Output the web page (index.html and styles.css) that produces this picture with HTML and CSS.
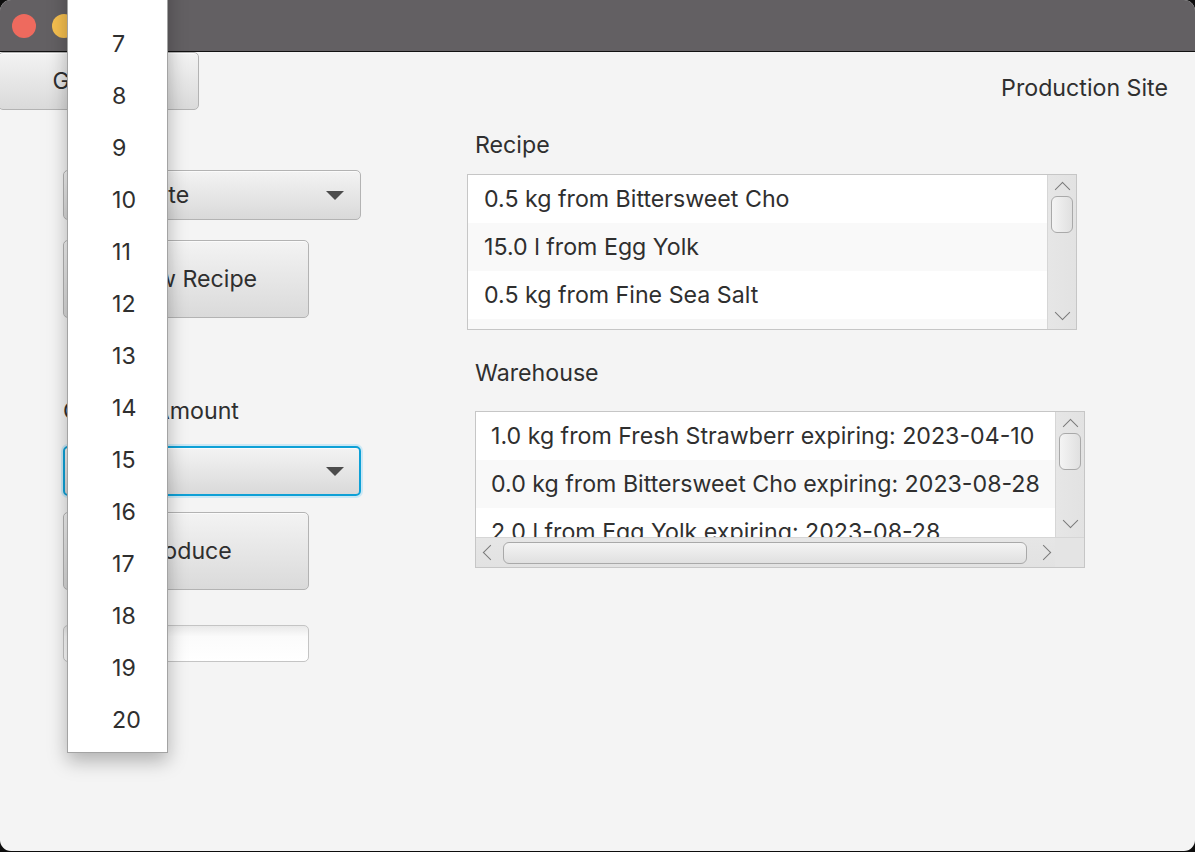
FILE: index.html
```html
<!DOCTYPE html>
<html>
<head>
<meta charset="utf-8">
<link rel="stylesheet" href="styles.css">
</head>
<body>
<div class="window">
  <div class="titlebar">
    <span class="light red"></span>
    <span class="light yellow"></span>
    <span class="light green"></span>
  </div>
  <div class="content">
    <div class="topbar">
      <button class="btn back">Go Back</button>
      <span class="site">Production Site</span>
    </div>
    <div class="main">
      <div class="left">
        <div class="combo"><span class="combo-text">Chocolate</span><i class="arrow"></i></div>
        <button class="btn big recipe-btn">Show Recipe</button>
        <div class="label amount">Choose Amount</div>
        <div class="combo focused"><span class="combo-text"></span><i class="arrow"></i></div>
        <button class="btn big produce-btn">Produce</button>
        <div class="field"></div>
      </div>
      <div class="right">
        <div class="label title recipe-title">Recipe</div>
        <div class="list recipe-list">
          <div class="rows">
            <div class="row">0.5 kg from Bittersweet Cho</div>
            <div class="row odd">15.0 l from Egg Yolk</div>
            <div class="row">0.5 kg from Fine Sea Salt</div>
            <div class="row odd"></div>
          </div>
          <div class="vscroll">
            <span class="chev up"></span>
            <span class="vthumb"></span>
            <span class="vspace"></span>
            <span class="chev down"></span>
          </div>
        </div>
        <div class="label title wh-title">Warehouse</div>
        <div class="list wh-list">
          <div class="wh-top">
            <div class="rows">
              <div class="row">1.0 kg from Fresh Strawberr expiring: 2023-04-10</div>
              <div class="row odd">0.0 kg from Bittersweet Cho expiring: 2023-08-28</div>
              <div class="row">2.0 l from Egg Yolk expiring: 2023-08-28</div>
            </div>
            <div class="vscroll">
              <span class="chev up"></span>
              <span class="vthumb"></span>
              <span class="vspace"></span>
              <span class="chev down"></span>
            </div>
          </div>
          <div class="hscroll">
            <span class="chev left"></span>
            <span class="hthumb"></span>
            <span class="chev right"></span>
            <span class="corner"></span>
          </div>
        </div>
      </div>
    </div>
  </div>
  <div class="popup">
    <div class="item">6</div>
    <div class="item">7</div>
    <div class="item">8</div>
    <div class="item">9</div>
    <div class="item">10</div>
    <div class="item">11</div>
    <div class="item">12</div>
    <div class="item">13</div>
    <div class="item">14</div>
    <div class="item">15</div>
    <div class="item">16</div>
    <div class="item">17</div>
    <div class="item">18</div>
    <div class="item">19</div>
    <div class="item">20</div>
  </div>
</div>
</body>
</html>
```

FILE: styles.css
```css
* { box-sizing: border-box; }
html, body {
  margin: 0;
  padding: 0;
  background: #0d0d0d;
  width: 1195px;
  height: 852px;
  overflow: hidden;
}
body {
  font-family: Inter, "Noto Sans", sans-serif;
  color: #2f2f2f;
  font-size: 23.2px;
}
.window {
  position: relative;
  width: 1195px;
  height: 851px;
  background: #f4f4f4;
  border-radius: 11px;
  overflow: hidden;
}
.titlebar {
  height: 52px;
  background: #636063;
  border-bottom: 1px solid #111;
  display: flex;
  align-items: center;
  gap: 16px;
  padding: 0 0 0 12px;
}
.light {
  width: 24px;
  height: 24px;
  border-radius: 50%;
  display: block;
}
.red { background: #ee6a5e; }
.yellow { background: #f5bf4f; }
.green { background: #61c554; }

.topbar {
  height: 58px;
  display: flex;
  justify-content: space-between;
  align-items: center;
}
.btn {
  font: inherit;
  color: #2f2f2f;
  border: 1px solid #b3b3b3;
  border-radius: 5px;
  background: linear-gradient(to bottom, #f3f3f3 0%, #e4e4e4 60%, #dadada 100%);
  box-shadow: inset 0 1px 0 #fbfbfb;
  padding: 0;
  margin: 0;
}
.back {
  width: 201px;
  height: 58px;
  margin-left: -2px;
  text-align: center;
}
.site {
  padding-right: 27px;
  padding-top: 13px;
}

.main {
  display: flex;
  align-items: flex-start;
  gap: 106px;
  padding-left: 63px;
}
.left {
  width: 298px;
  display: flex;
  flex-direction: column;
  align-items: flex-start;
}
.combo {
  width: 298px;
  height: 50px;
  border: 1px solid #b3b3b3;
  border-radius: 5px;
  background: linear-gradient(to bottom, #f3f3f3 0%, #e4e4e4 60%, #d9d9d9 100%);
  box-shadow: inset 0 1px 0 #fbfbfb;
  display: flex;
  align-items: center;
  justify-content: space-between;
  padding: 0 16px 0 14px;
  margin-top: 60px;
}
.arrow {
  width: 0;
  height: 0;
  border-left: 9px solid transparent;
  border-right: 9px solid transparent;
  border-top: 9px solid #4c4c4c;
  display: block;
}
.combo.focused {
  margin-top: 21px;
  border: 2px solid #0ea0d6;
  box-shadow: 0 0 0 2px #cbe8f5, inset 0 1px 0 #fbfbfb;
  padding-right: 15px;
}
.big {
  width: 246px;
  height: 78px;
}
.recipe-btn { margin-top: 20px; }
.label {
  line-height: 28px;
  height: 28px;
}
.amount { margin-top: 79px; }
.produce-btn { margin-top: 16px; }
.field {
  margin-top: 35px;
  width: 246px;
  height: 37px;
  border: 1px solid #c4c4c4;
  border-radius: 5px;
  background: linear-gradient(to bottom, #e9e9e9 0%, #fbfbfb 30%, #ffffff 100%);
}

.right {
  display: flex;
  flex-direction: column;
  align-items: flex-start;
}
.title { padding-left: 8px; }
.recipe-title { margin-top: 21px; }
.wh-title { margin-top: 29px; }
.list {
  width: 610px;
  border: 1px solid #c6c6c6;
  background: #fff;
  display: flex;
  overflow: hidden;
}
.recipe-list {
  margin-top: 15px;
  height: 156px;
}
.wh-list {
  margin-top: 24px;
  margin-left: 8px;
  height: 157px;
  flex-direction: column;
}
.rows {
  flex: 1;
  overflow: hidden;
}
.row {
  height: 48px;
  line-height: 48px;
  padding-left: 16px;
  white-space: nowrap;
  background: #ffffff;
}
.row.odd { background: #f9f9f9; }
.wh-list .row { padding-left: 15px; }

.vscroll {
  width: 29px;
  flex: none;
  background: linear-gradient(to right, #e6e6e6, #e2e2e2);
  border-left: 1px solid #d6d6d6;
  display: flex;
  flex-direction: column;
  align-items: center;
}
.vthumb {
  width: 22px;
  height: 37px;
  border: 1px solid #a9a9a9;
  border-radius: 6px;
  background: linear-gradient(to right, #f4f4f4, #e0e0e0);
  display: block;
  margin-top: 1px;
}
.vspace { flex: 1; }
.chev {
  display: block;
  width: 11px;
  height: 11px;
  border-left: 1.5px solid #7a7a7a;
  border-top: 1.5px solid #7a7a7a;
}
.chev.up { transform: rotate(45deg); margin-top: 9px; }
.chev.down { transform: rotate(225deg); margin-bottom: 11px; }
.wh-top {
  display: flex;
  height: 125px;
  overflow: hidden;
}
.hscroll {
  height: 30px;
  flex: none;
  display: flex;
  align-items: center;
  background: linear-gradient(to bottom, #e6e6e6, #e2e2e2);
  border-top: 1px solid #d6d6d6;
  position: relative;
}
.chev.left { transform: rotate(-45deg); margin-left: 9px; }
.chev.right { transform: rotate(135deg); margin-left: 11px; }
.hthumb {
  display: block;
  width: 524px;
  height: 22px;
  margin-left: 7px;
  border: 1px solid #a9a9a9;
  border-radius: 6px;
  background: linear-gradient(to bottom, #f4f4f4, #e0e0e0);
}
.corner {
  position: absolute;
  right: 0;
  top: 0;
  width: 29px;
  height: 30px;
  background: #e4e4e4;
}

.popup {
  position: absolute;
  left: 67px;
  top: -35px;
  width: 101px;
  height: 788px;
  background: #fff;
  border: 1px solid #a3a3a3;
  box-shadow: 0 8px 18px rgba(0,0,0,0.28);
  padding-left: 44px;
  z-index: 5;
}
.item {
  height: 52px;
  line-height: 52px;
}
```
